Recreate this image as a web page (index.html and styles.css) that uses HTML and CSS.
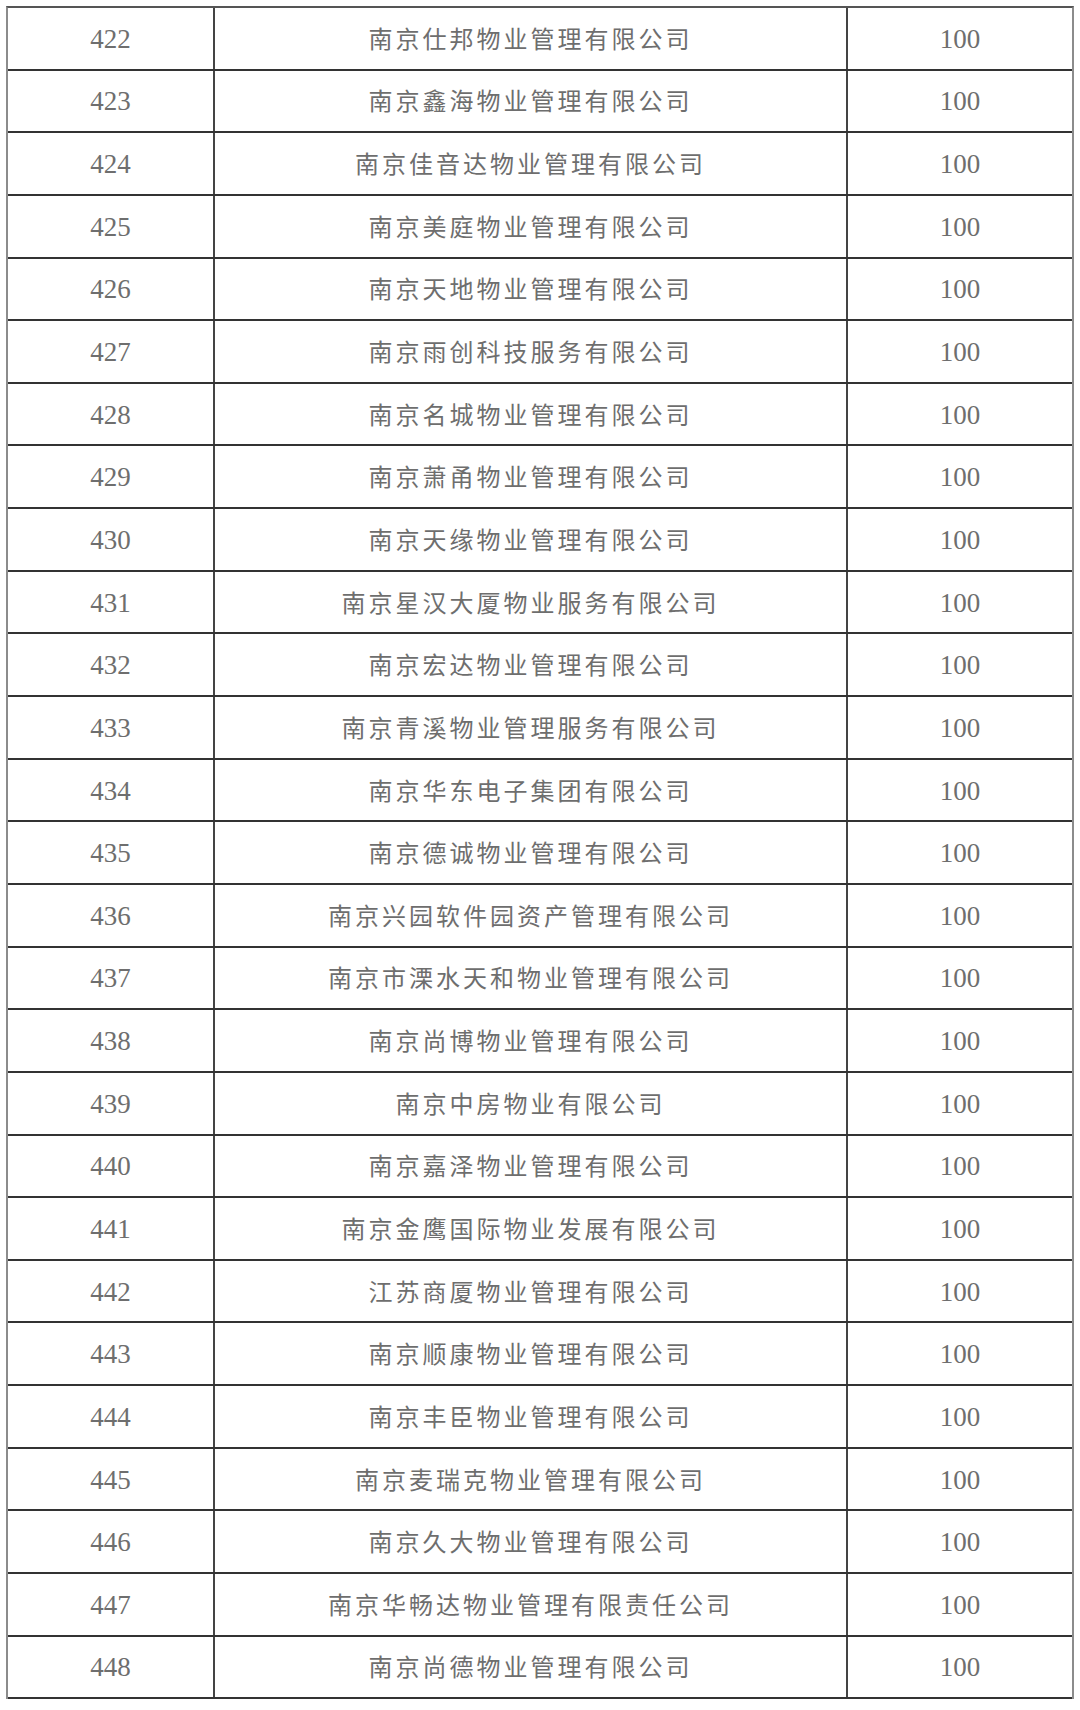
FILE: index.html
```html
<!DOCTYPE html>
<html lang="zh-CN">
<head>
<meta charset="utf-8">
<title>名单</title>
<link rel="stylesheet" href="styles.css">
</head>
<body>
<div class="table">
  <div class="row"><div class="cell num">422</div><div class="cell name">南京仕邦物业管理有限公司</div><div class="cell score">100</div></div>
  <div class="row"><div class="cell num">423</div><div class="cell name">南京鑫海物业管理有限公司</div><div class="cell score">100</div></div>
  <div class="row"><div class="cell num">424</div><div class="cell name">南京佳音达物业管理有限公司</div><div class="cell score">100</div></div>
  <div class="row"><div class="cell num">425</div><div class="cell name">南京美庭物业管理有限公司</div><div class="cell score">100</div></div>
  <div class="row"><div class="cell num">426</div><div class="cell name">南京天地物业管理有限公司</div><div class="cell score">100</div></div>
  <div class="row"><div class="cell num">427</div><div class="cell name">南京雨创科技服务有限公司</div><div class="cell score">100</div></div>
  <div class="row"><div class="cell num">428</div><div class="cell name">南京名城物业管理有限公司</div><div class="cell score">100</div></div>
  <div class="row"><div class="cell num">429</div><div class="cell name">南京萧甬物业管理有限公司</div><div class="cell score">100</div></div>
  <div class="row"><div class="cell num">430</div><div class="cell name">南京天缘物业管理有限公司</div><div class="cell score">100</div></div>
  <div class="row"><div class="cell num">431</div><div class="cell name">南京星汉大厦物业服务有限公司</div><div class="cell score">100</div></div>
  <div class="row"><div class="cell num">432</div><div class="cell name">南京宏达物业管理有限公司</div><div class="cell score">100</div></div>
  <div class="row"><div class="cell num">433</div><div class="cell name">南京青溪物业管理服务有限公司</div><div class="cell score">100</div></div>
  <div class="row"><div class="cell num">434</div><div class="cell name">南京华东电子集团有限公司</div><div class="cell score">100</div></div>
  <div class="row"><div class="cell num">435</div><div class="cell name">南京德诚物业管理有限公司</div><div class="cell score">100</div></div>
  <div class="row"><div class="cell num">436</div><div class="cell name">南京兴园软件园资产管理有限公司</div><div class="cell score">100</div></div>
  <div class="row"><div class="cell num">437</div><div class="cell name">南京市溧水天和物业管理有限公司</div><div class="cell score">100</div></div>
  <div class="row"><div class="cell num">438</div><div class="cell name">南京尚博物业管理有限公司</div><div class="cell score">100</div></div>
  <div class="row"><div class="cell num">439</div><div class="cell name">南京中房物业有限公司</div><div class="cell score">100</div></div>
  <div class="row"><div class="cell num">440</div><div class="cell name">南京嘉泽物业管理有限公司</div><div class="cell score">100</div></div>
  <div class="row"><div class="cell num">441</div><div class="cell name">南京金鹰国际物业发展有限公司</div><div class="cell score">100</div></div>
  <div class="row"><div class="cell num">442</div><div class="cell name">江苏商厦物业管理有限公司</div><div class="cell score">100</div></div>
  <div class="row"><div class="cell num">443</div><div class="cell name">南京顺康物业管理有限公司</div><div class="cell score">100</div></div>
  <div class="row"><div class="cell num">444</div><div class="cell name">南京丰臣物业管理有限公司</div><div class="cell score">100</div></div>
  <div class="row"><div class="cell num">445</div><div class="cell name">南京麦瑞克物业管理有限公司</div><div class="cell score">100</div></div>
  <div class="row"><div class="cell num">446</div><div class="cell name">南京久大物业管理有限公司</div><div class="cell score">100</div></div>
  <div class="row"><div class="cell num">447</div><div class="cell name">南京华畅达物业管理有限责任公司</div><div class="cell score">100</div></div>
  <div class="row"><div class="cell num">448</div><div class="cell name">南京尚德物业管理有限公司</div><div class="cell score">100</div></div>
</div>
</body>
</html>
```

FILE: styles.css
```css
html, body {
  margin: 0;
  padding: 0;
  background: #ffffff;
}

body {
  padding: 6px 0 0 6px;
}

.table {
  width: 1068px;
  box-sizing: border-box;
  border-top: 2px solid #555555;
  border-left: 2px solid #8c8c8c;
  border-right: 2px solid #8c8c8c;
}

.row {
  display: grid;
  grid-template-columns: 205px 635px 1fr;
  height: 62.65px;
  box-sizing: border-box;
  border-bottom: 2px solid #333333;
}

.cell {
  display: flex;
  align-items: center;
  justify-content: center;
  color: #6e6e6e;
  box-sizing: border-box;
}

.num, .score {
  font-family: "Liberation Serif", "Times New Roman", serif;
  font-size: 27px;
  padding-top: 2px;
}

.name {
  font-family: "Noto Sans CJK SC", "Noto Sans", sans-serif;
  font-size: 24px;
  letter-spacing: 3px;
  padding-bottom: 2px;
  border-left: 2px solid #444444;
  border-right: 2px solid #444444;
}
```
